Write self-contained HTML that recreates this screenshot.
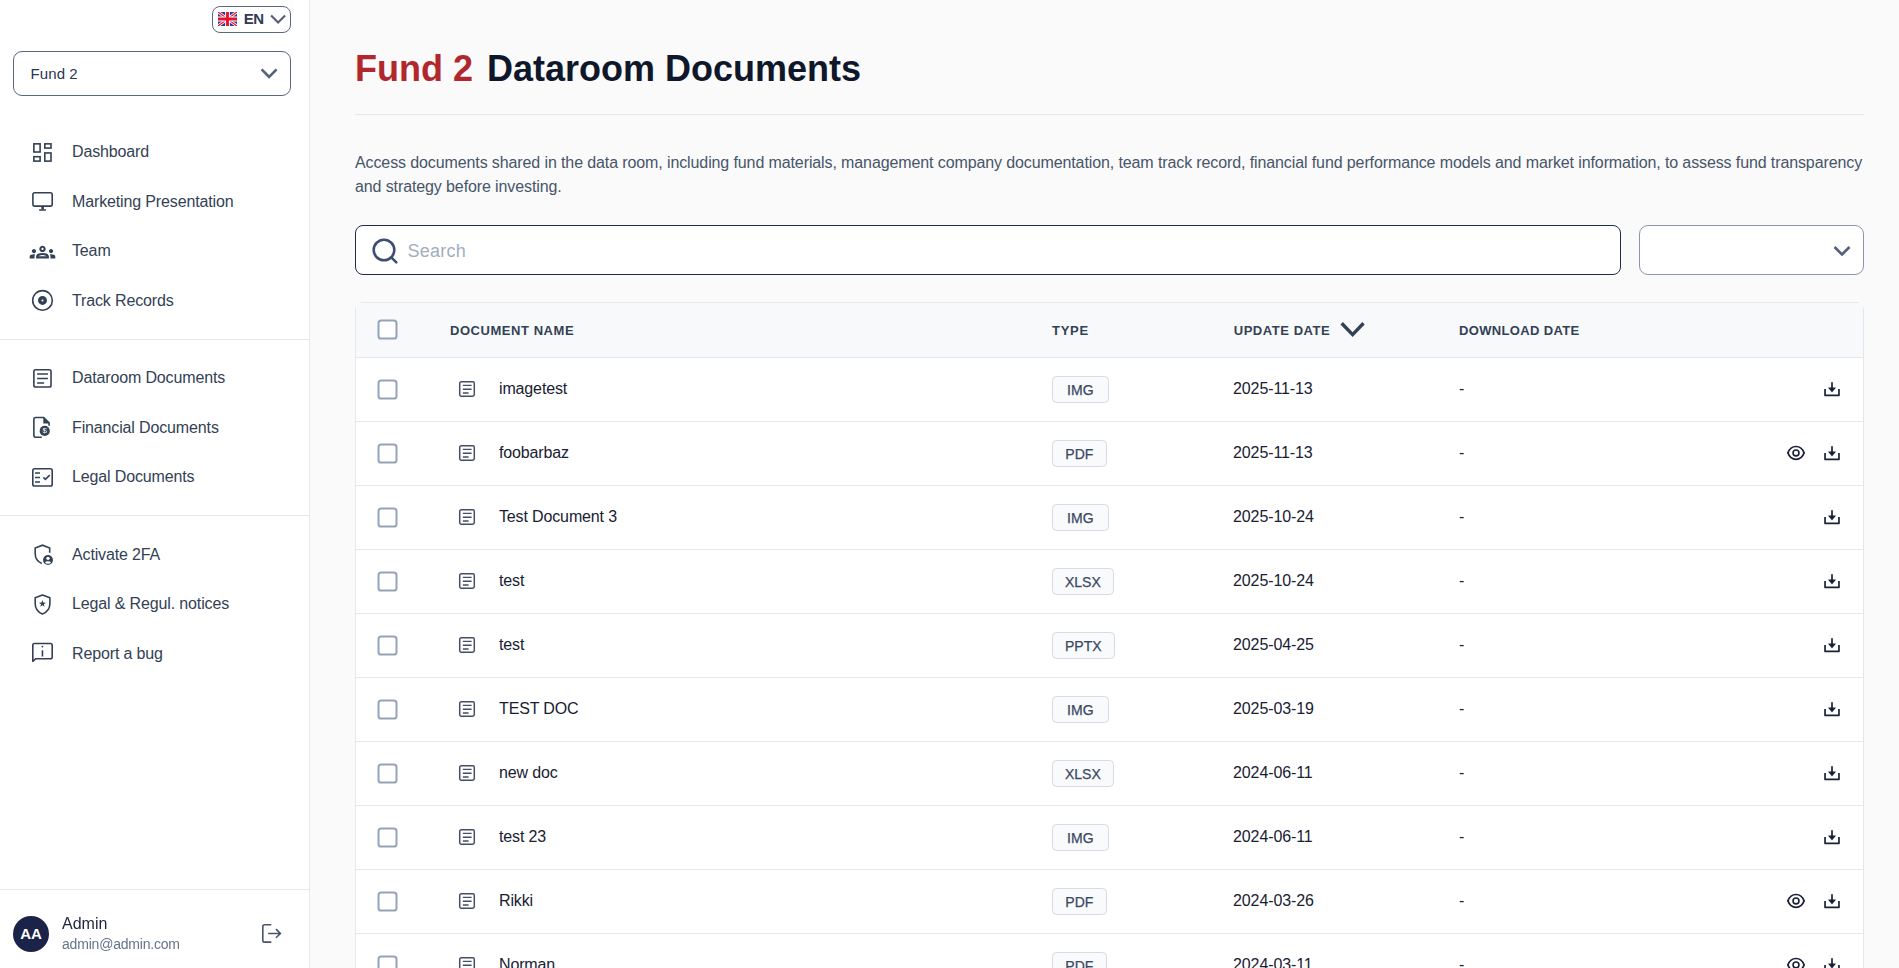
<!DOCTYPE html>
<html lang="en">
<head>
<meta charset="utf-8">
<title>Fund 2 Dataroom Documents</title>
<style>
*{box-sizing:border-box;margin:0;padding:0}
html,body{width:1899px;height:968px;overflow:hidden}
body{font-family:"Liberation Sans",sans-serif;background:#fafafb;color:#1e293b;position:relative}
/* sidebar */
#side{position:absolute;left:0;top:0;width:310px;height:968px;background:#fff;border-right:1px solid #e5e7eb}
.lang{position:absolute;left:212px;top:6px;width:79px;height:27px;border:1px solid #5b6680;border-radius:8px;background:#fff}
.lang .flag{position:absolute;left:5px;top:4.600px;width:19px;height:14px}
.lang span{position:absolute;left:30.700px;top:3px;font-size:15px;font-weight:700;color:#2f3a55;line-height:17px;letter-spacing:-.4px}
.lang .chev{position:absolute;left:57px;top:6px}
.fund{position:absolute;left:13px;top:51px;width:278px;height:45px;border:1px solid #5b6680;border-radius:9px;background:#fff}
.fund span{position:absolute;left:16.500px;top:13px;font-size:15px;line-height:18px;color:#2b3650;letter-spacing:.1px}
.fund svg{position:absolute;left:246px;top:15px}
.nav{position:absolute;left:0;width:309px;height:24px}
.nav svg{position:absolute;left:30px;top:0;width:24px;height:24px}
.nav span{position:absolute;left:72px;top:2px;font-size:16px;line-height:20px;color:#334155;white-space:nowrap;letter-spacing:-.14px}
.hr{position:absolute;left:0;width:309px;height:1px;background:#e5e7eb}
.avatar{position:absolute;left:13px;top:916px;width:36px;height:36px;border-radius:50%;background:#1b2448;color:#fff;font-weight:700;font-size:15px;line-height:36px;text-align:center}
.uname{position:absolute;left:62px;top:914px;font-size:16px;line-height:20px;color:#1e2340}
.umail{position:absolute;left:62px;top:935px;font-size:14px;line-height:18px;color:#64748b;letter-spacing:-.2px}
.logout{position:absolute;left:259px;top:922px}
/* main */
h1{position:absolute;left:355px;top:48px;font-size:36px;line-height:42px;font-weight:700;color:#0f172a;white-space:nowrap}
h1 b{color:#b0282e;margin-right:4px}
.rule{position:absolute;left:355px;top:114px;width:1509px;height:1px;background:#e2e8f0}
.desc{position:absolute;left:355px;top:151px;width:1512px;font-size:16px;line-height:24px;color:#475569;letter-spacing:-.11px}
.search{position:absolute;left:355px;top:225px;width:1266px;height:50px;border:1px solid #202b4b;border-radius:8px;background:#fff}
.search svg{position:absolute;left:12.800px;top:9px}
.search span{position:absolute;left:51.500px;top:13.500px;font-size:18px;line-height:22px;color:#a3adbd;letter-spacing:.25px}
.filter{position:absolute;left:1639px;top:225px;width:225px;height:50px;border:1px solid #8c96ab;border-radius:9px;background:#fff}
.filter svg{position:absolute;left:193px;top:19px}
/* table */
.card{position:absolute;left:355px;top:302px;width:1509px;height:700px;border:1px solid #e5e7eb;border-radius:8px;background:#fff}
.thead{position:absolute;left:0;top:0;width:100%;height:55px;background:#f8f9fb;border-bottom:1px solid #e4e7ed}
.th{position:absolute;top:20px;font-size:13px;line-height:16px;font-weight:700;letter-spacing:.55px;color:#334155;white-space:nowrap}
.row{position:absolute;left:0;width:100%;height:64px;border-bottom:1px solid #e5e7eb}
.cb{position:absolute;left:20px;width:23px;height:23px}
.row .cb{top:20px}
.row .doc{position:absolute;left:101.200px;top:21px}
.row .nm{position:absolute;left:143px;top:21px;letter-spacing:-.14px;font-size:16px;line-height:20px;color:#182132;white-space:nowrap}
.row .bd{position:absolute;left:696px;top:18px;height:27px;text-align:center;border:1px solid #d5dae4;border-radius:4.500px;background:#f8fafc;font-size:14px;line-height:27px;font-weight:400;color:#3b4863;-webkit-text-stroke:.25px #3b4863}
.row .dt{position:absolute;left:877px;top:21px;font-size:16px;line-height:20px;color:#182132;letter-spacing:-.1px}
.row .dd{position:absolute;left:1103px;top:21px;font-size:16px;line-height:20px;color:#182132}
.row .dl{position:absolute;left:1465px;top:21px}
.row .eye{position:absolute;left:1429px;top:20px}
</style>
</head>
<body>
<svg width="0" height="0" style="position:absolute"><defs>
<symbol id="i-doc" viewBox="0 0 20 20"><rect x="2.700" y="2.700" width="14.600" height="14.600" rx="1.700" fill="none" stroke="#434f64" stroke-width="1.500"/><path d="M5.800 6.400H14.600M5.800 10.200H14.600M5.800 13.950H11.600" fill="none" stroke="#434f64" stroke-width="1.400"/></symbol>
<symbol id="i-dl" viewBox="0 0 22 22"><path d="M4.050 10.100V16.400H17.950V10.100" fill="none" stroke="#1a2035" stroke-width="1.700" stroke-linejoin="round"/><path d="M11 3.200V10" fill="none" stroke="#1a2035" stroke-width="1.700"/><path d="M7 8.500H15L11 13.600Z" fill="#1a2035"/></symbol>
<symbol id="i-eye" viewBox="0 0 22 22"><g transform="translate(0 .5)"><path d="M2.900 10.400C4.400 6.300 7.500 4 11 4C14.500 4 17.600 6.300 19.100 10.400C17.600 14.500 14.500 16.800 11 16.800C7.500 16.800 4.400 14.500 2.900 10.400Z" fill="none" stroke="#1a2035" stroke-width="1.700"/><circle cx="11" cy="10.450" r="2.950" fill="none" stroke="#1a2035" stroke-width="1.600"/></g></symbol>
<symbol id="i-cb" viewBox="0 0 23 23"><rect x="2.500" y="2.500" width="18" height="18" rx="2.600" fill="#fff" stroke="#94a3b8" stroke-width="2"/></symbol>
</defs></svg>
<div id="side">
  <div class="lang">
    <svg class="flag" viewBox="0 0 60 44" preserveAspectRatio="none"><rect width="60" height="44" fill="#2a3b9c"/><path d="M0 0L60 44M60 0L0 44" stroke="#fff" stroke-width="9"/><path d="M0 0L60 44M60 0L0 44" stroke="#e8112d" stroke-width="4"/><path d="M30 0V44M0 22H60" stroke="#fff" stroke-width="15"/><path d="M30 0V44M0 22H60" stroke="#e8112d" stroke-width="9"/></svg>
    <span>EN</span>
    <svg class="chev" width="17" height="12" viewBox="0 0 17 12"><path d="M1.100 2.500L8.100 9.500L15.100 2.500" fill="none" stroke="#55607a" stroke-width="2.200"/></svg>
  </div>
  <div class="fund"><span>Fund 2</span><svg width="18" height="12" viewBox="0 0 18 12"><path d="M1.600 2.300L9.100 9.800L16.600 2.300" fill="none" stroke="#55607a" stroke-width="2.600"/></svg></div>

  <div class="nav" style="top:140px"><span>Dashboard</span></div>
  <div class="nav" style="top:190px"><span>Marketing Presentation</span></div>
  <div class="nav" style="top:239px"><span>Team</span></div>
  <div class="nav" style="top:289px"><span>Track Records</span></div>
  <div class="hr" style="top:339px"></div>
  <div class="nav" style="top:366px"><span>Dataroom Documents</span></div>
  <div class="nav" style="top:416px"><span>Financial Documents</span></div>
  <div class="nav" style="top:465px"><span>Legal Documents</span></div>
  <div class="hr" style="top:515px"></div>
  <div class="nav" style="top:543px"><span>Activate 2FA</span></div>
  <div class="nav" style="top:592px"><span>Legal &amp; Regul. notices</span></div>
  <div class="nav" style="top:642px"><span>Report a bug</span></div>
  <div class="hr" style="top:889px"></div>
  <svg id="icons" width="310" height="968" viewBox="0 0 310 968" style="position:absolute;left:0;top:0;will-change:transform" fill="none" stroke="#334155" stroke-width="1.600">
    <!-- dashboard -->
    <rect x="33.850" y="143.850" width="6.250" height="8.150"/><rect x="44.800" y="143.850" width="6.200" height="4.200"/><rect x="33.850" y="156.700" width="6.250" height="4.400"/><rect x="44.800" y="152.950" width="6.200" height="8.150"/>
    <!-- monitor -->
    <rect x="32.900" y="192.750" width="19.300" height="13.400" rx="1.800"/><rect x="41.300" y="206.500" width="2.600" height="3" fill="#334155" stroke="none"/><path d="M39.700 210H45.400" stroke-linecap="round"/>
    <!-- team -->
    <g transform="translate(29.700 239.300) scale(1.0667)" fill="#334155" stroke="none"><path d="M4 13c1.100 0 2-.9 2-2s-.9-2-2-2-2 .9-2 2 .9 2 2 2zm1.130 1.100c-.37-.06-.74-.1-1.130-.1-.99 0-1.930.21-2.780.58C.48 14.900 0 15.620 0 16.430V18h4.500v-1.610c0-.83.23-1.610.63-2.290zM20 13c1.100 0 2-.9 2-2s-.9-2-2-2-2 .9-2 2 .9 2 2 2zm4 3.430c0-.81-.48-1.530-1.220-1.850-.85-.37-1.790-.58-2.780-.58-.39 0-.76.040-1.130.1.400.68.630 1.460.63 2.290V18H24v-1.570zm-7.760-2.780c-1.170-.52-2.610-.9-4.240-.9-1.630 0-3.070.39-4.240.9C6.680 14.130 6 15.210 6 16.390V18h12v-1.610c0-1.180-.68-2.260-1.760-2.740zM8.070 16c.09-.23.130-.39.910-.69.970-.38 1.990-.56 3.020-.56s2.050.18 3.020.56c.77.300.81.460.91.690H8.070zM12 8c.55 0 1 .45 1 1s-.45 1-1 1-1-.45-1-1 .45-1 1-1m0-2c-1.660 0-3 1.340-3 3s1.340 3 3 3 3-1.340 3-3-1.340-3-3-3z"/></g>
    <!-- track records -->
    <circle cx="42.500" cy="300.400" r="9.800"/><circle cx="42.500" cy="300.400" r="2.750" stroke-width="3.500"/>
    <!-- dataroom -->
    <rect x="33.870" y="369.750" width="17.160" height="17.280" rx="1.800"/><path d="M37.100 374H47.950M37.100 378.450H47.950M37.100 383H44.100"/>
    <!-- financial -->
    <path d="M41.800 437.280H35.870a2 2 0 0 1-2-2V419.560a2 2 0 0 1 2-2H43.600L49.100 422.900V425.850"/><path d="M43.300 417.500V423.500H49.300Z" fill="#334155" stroke="none"/><circle cx="44.700" cy="430.900" r="5.100" fill="#334155" stroke="none"/>
    <text x="44.700" y="433.300" font-family="Liberation Sans, sans-serif" font-size="8" font-weight="400" fill="#fff" stroke="none" text-anchor="middle">$</text>
    <!-- legal docs -->
    <rect x="32.800" y="468.750" width="19.400" height="17.280" rx="1.800"/><path d="M35 473H40M35 477.450H40M35 482H40"/><path d="M43.400 477.400L45.400 479.400L49.700 475.100"/>
    <!-- 2FA -->
    <path d="M49.700 552.850V548L42.450 545.150L35.200 548V553.500C35.200 558.300 38 562 41.800 563.400"/><circle cx="48" cy="560" r="4.960" fill="#334155" stroke="none"/><circle cx="48" cy="558.350" r="1.700" fill="#fff" stroke="none"/><ellipse cx="48" cy="562.500" rx="2.800" ry="1.250" fill="#fff" stroke="none"/>
    <!-- legal notices -->
    <path d="M42.450 594.950L49.900 597.800V603.500C49.900 608.300 46.800 612.300 42.450 613.950C38.100 612.300 35.200 608.300 35.200 603.500V597.800Z" stroke-linejoin="round"/><path d="M42.450 600.100L43.320 602.600L45.970 602.660L43.860 604.260L44.630 606.800L42.450 605.280L40.270 606.800L41.040 604.260L38.930 602.660L41.580 602.600Z" fill="#334155" stroke="none"/>
    <!-- bug -->
    <path d="M32.800 661.300V645.360a1.800 1.800 0 0 1 1.800-1.800H50.400a1.800 1.800 0 0 1 1.800 1.800V657a1.800 1.800 0 0 1-1.800 1.800H35.600Z" stroke-linejoin="round"/><circle cx="42.450" cy="646.600" r="0.950" fill="#334155" stroke="none"/><path d="M42.450 650.300V656.500"/>
    <!-- logout -->
    <g stroke="#44546c"><path d="M271.300 924.750H264.800a2 2 0 0 0-2 2V940.160a2 2 0 0 0 2 2H271.300"/><path d="M268.200 933.450H280.300M276 929.100L280.400 933.450L276 937.800"/></g>
  </svg>
  <div class="avatar">AA</div>
  <div class="uname">Admin</div>
  <div class="umail">admin@admin.com</div>
</div>

<h1><b>Fund 2</b> Dataroom Documents</h1>
<div class="rule"></div>
<div class="desc">Access documents shared in the data room, including fund materials, management company documentation, team track record, financial fund performance models and market information, to assess fund transparency and strategy before investing.</div>
<div class="search"><svg width="32" height="32" viewBox="0 0 32 32"><circle cx="15" cy="15" r="10.300" fill="none" stroke="#3f4e70" stroke-width="2.600"/><path d="M22.300 22.300L27.300 27.300" stroke="#3f4e70" stroke-width="2.600" stroke-linecap="round"/></svg><span>Search</span></div>
<div class="filter"><svg width="18" height="12" viewBox="0 0 18 12"><path d="M1.500 2L9 9.500L16.500 2" fill="none" stroke="#55607a" stroke-width="2.600"/></svg></div>

<div class="card">
  <div class="thead">
    <svg class="cb" style="top:15px"><use href="#i-cb"/></svg>
    <div class="th" style="left:94px">DOCUMENT NAME</div>
    <div class="th" style="left:696px;letter-spacing:.7px">TYPE</div>
    <div class="th" style="left:877.700px">UPDATE DATE</div>
    <svg style="position:absolute;left:982px;top:17px" width="30" height="22" viewBox="0 0 30 22"><path d="M3.700 3.300L14.600 14.600L25.500 3.300" fill="none" stroke="#334155" stroke-width="3.400"/></svg>
    <div class="th" style="left:1103px;letter-spacing:.35px">DOWNLOAD DATE</div>
  </div>
  <div class="row" style="top:55px"><svg class="cb"><use href="#i-cb"/></svg><svg class="doc" width="20" height="20"><use href="#i-doc"/></svg><div class="nm">imagetest</div><div class="bd" style="width:56.7px">IMG</div><div class="dt">2025-11-13</div><div class="dd">-</div><svg class="dl" width="22" height="22"><use href="#i-dl"/></svg></div>
  <div class="row" style="top:119px"><svg class="cb"><use href="#i-cb"/></svg><svg class="doc" width="20" height="20"><use href="#i-doc"/></svg><div class="nm">foobarbaz</div><div class="bd" style="width:54.7px">PDF</div><div class="dt">2025-11-13</div><div class="dd">-</div><svg class="eye" width="22" height="22"><use href="#i-eye"/></svg><svg class="dl" width="22" height="22"><use href="#i-dl"/></svg></div>
  <div class="row" style="top:183px"><svg class="cb"><use href="#i-cb"/></svg><svg class="doc" width="20" height="20"><use href="#i-doc"/></svg><div class="nm">Test Document 3</div><div class="bd" style="width:56.7px">IMG</div><div class="dt">2025-10-24</div><div class="dd">-</div><svg class="dl" width="22" height="22"><use href="#i-dl"/></svg></div>
  <div class="row" style="top:247px"><svg class="cb"><use href="#i-cb"/></svg><svg class="doc" width="20" height="20"><use href="#i-doc"/></svg><div class="nm">test</div><div class="bd" style="width:61.8px">XLSX</div><div class="dt">2025-10-24</div><div class="dd">-</div><svg class="dl" width="22" height="22"><use href="#i-dl"/></svg></div>
  <div class="row" style="top:311px"><svg class="cb"><use href="#i-cb"/></svg><svg class="doc" width="20" height="20"><use href="#i-doc"/></svg><div class="nm">test</div><div class="bd" style="width:62.6px">PPTX</div><div class="dt">2025-04-25</div><div class="dd">-</div><svg class="dl" width="22" height="22"><use href="#i-dl"/></svg></div>
  <div class="row" style="top:375px"><svg class="cb"><use href="#i-cb"/></svg><svg class="doc" width="20" height="20"><use href="#i-doc"/></svg><div class="nm">TEST DOC</div><div class="bd" style="width:56.7px">IMG</div><div class="dt">2025-03-19</div><div class="dd">-</div><svg class="dl" width="22" height="22"><use href="#i-dl"/></svg></div>
  <div class="row" style="top:439px"><svg class="cb"><use href="#i-cb"/></svg><svg class="doc" width="20" height="20"><use href="#i-doc"/></svg><div class="nm">new doc</div><div class="bd" style="width:61.8px">XLSX</div><div class="dt">2024-06-11</div><div class="dd">-</div><svg class="dl" width="22" height="22"><use href="#i-dl"/></svg></div>
  <div class="row" style="top:503px"><svg class="cb"><use href="#i-cb"/></svg><svg class="doc" width="20" height="20"><use href="#i-doc"/></svg><div class="nm">test 23</div><div class="bd" style="width:56.7px">IMG</div><div class="dt">2024-06-11</div><div class="dd">-</div><svg class="dl" width="22" height="22"><use href="#i-dl"/></svg></div>
  <div class="row" style="top:567px"><svg class="cb"><use href="#i-cb"/></svg><svg class="doc" width="20" height="20"><use href="#i-doc"/></svg><div class="nm">Rikki</div><div class="bd" style="width:54.7px">PDF</div><div class="dt">2024-03-26</div><div class="dd">-</div><svg class="eye" width="22" height="22"><use href="#i-eye"/></svg><svg class="dl" width="22" height="22"><use href="#i-dl"/></svg></div>
  <div class="row" style="top:631px"><svg class="cb"><use href="#i-cb"/></svg><svg class="doc" width="20" height="20"><use href="#i-doc"/></svg><div class="nm">Norman</div><div class="bd" style="width:54.7px">PDF</div><div class="dt">2024-03-11</div><div class="dd">-</div><svg class="eye" width="22" height="22"><use href="#i-eye"/></svg><svg class="dl" width="22" height="22"><use href="#i-dl"/></svg></div>
</div>
</body>
</html>
